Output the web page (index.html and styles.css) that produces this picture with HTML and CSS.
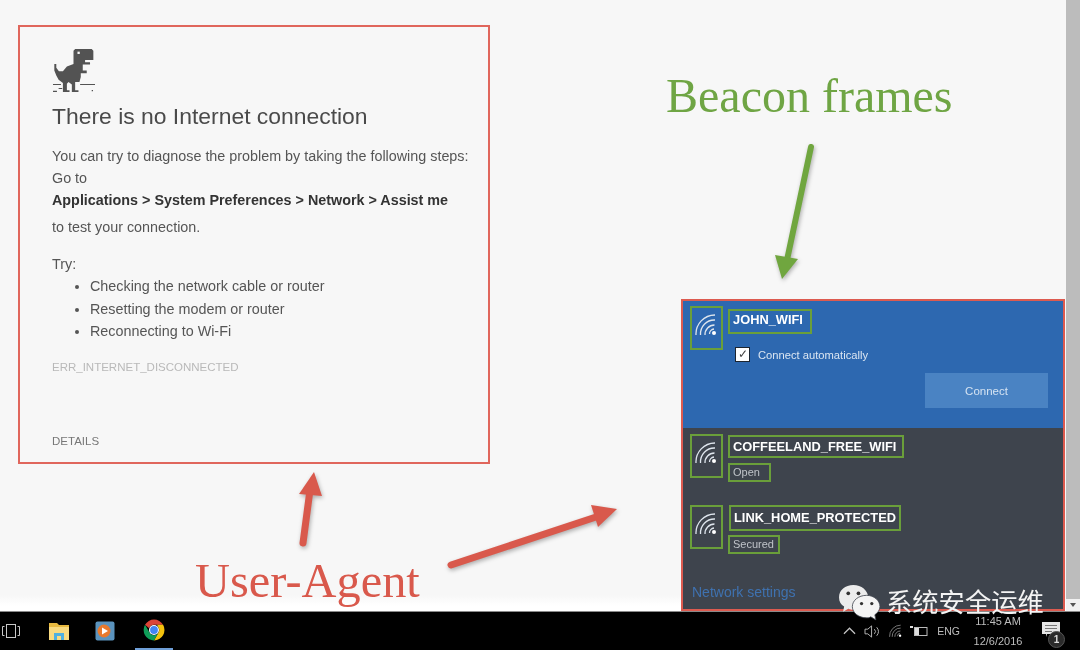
FILE: index.html
```html
<!DOCTYPE html>
<html lang="en">
<head>
    <meta charset="UTF-8">
    <meta name="viewport" content="width=device-width, initial-scale=1.0">
    <title>Beacon frames and User-Agent</title>
    <link rel="stylesheet" href="styles.css">
</head>
<body>
    <svg class="defs" width="0" height="0">
        <symbol id="wifi" viewBox="0 0 24 24">
            <path class="arc" d="M1 22A19 19 0 0 1 20 2" />
            <path class="arc" d="M5.500 22A14 14 0 0 1 20 7" />
            <path class="arc" d="M10 22A9.500 9.500 0 0 1 19.500 12" />
            <path class="arc" d="M14.500 21A5 5 0 0 1 19 16" />
            <circle class="dot" cx="19" cy="20" r="2" />
        </symbol>
    </svg>

    <div class="screen">
        <main class="stage">
            <section class="error-box">
                <svg class="dino" viewBox="35 20 130 140">
                    <path class="dino-body" d="M105 25H155L160 30V58H135V65H150V72H128V90H140V98H122V110L118 125H105V150H115V155H95V132L85 125L80 130V150H88V155H68V128L55 118L48 105L42 90V70H48V82L56 92H68L80 78L100 70V30Z" />
                    <rect class="dino-eye" x="112" y="33" width="7" height="7" />
                    <path class="dino-body" d="M38 131H62V134H38ZM120 131H165V134H120ZM38 151H50V155H38ZM55 143H66V146H55ZM155 149H159V153H155Z" />
                </svg>
                <h1 class="error-title">There is no Internet connection</h1>
                <p class="line first">You can try to diagnose the problem by taking the following steps:</p>
                <p class="line">Go to</p>
                <p class="line strong">Applications &gt; System Preferences &gt; Network &gt; Assist me</p>
                <p class="line gap-s">to test your connection.</p>
                <p class="line gap-l">Try:</p>
                <ul class="steps">
                    <li>Checking the network cable or router</li>
                    <li>Resetting the modem or router</li>
                    <li>Reconnecting to Wi-Fi</li>
                </ul>
                <p class="error-code">ERR_INTERNET_DISCONNECTED</p>
                <p class="details">DETAILS</p>
            </section>

            <section class="wifi-panel">
                <div class="wifi-active">
                    <div class="wifi-row">
                        <div class="mark icon-mark"><svg class="wifi-icon"><use href="#wifi" /></svg></div>
                        <div class="wifi-text">
                            <span class="mark name john">JOHN_WIFI</span>
                        </div>
                    </div>
                    <label class="auto">
                        <span class="check">&#10003;</span>
                        Connect automatically
                    </label>
                    <div class="connect-row"><span class="connect">Connect</span></div>
                </div>
                <div class="wifi-list">
                    <div class="wifi-row coffee">
                        <div class="mark icon-mark"><svg class="wifi-icon"><use href="#wifi" /></svg></div>
                        <div class="wifi-text">
                            <span class="mark name coffee-name">COFFEELAND_FREE_WIFI</span>
                            <span class="mark status open">Open</span>
                        </div>
                    </div>
                    <div class="wifi-row link">
                        <div class="mark icon-mark"><svg class="wifi-icon"><use href="#wifi" /></svg></div>
                        <div class="wifi-text">
                            <span class="mark name link-name">LINK_HOME_PROTECTED</span>
                            <span class="mark status secured">Secured</span>
                        </div>
                    </div>
                    <div class="settings">Network settings</div>
                </div>
            </section>

            <div class="scrollbar"><span class="scroll-down"></span></div>

            <!-- annotations on top of the screenshot -->
            <div class="label beacon">Beacon frames</div>
            <div class="label agent">User-Agent</div>
            <svg class="arrows" viewBox="0 0 1080 610">
                <g class="arrow-red">
                    <path class="shaft" d="M303 543L310 490" />
                    <path class="head" d="M314 472L322 496L299 494Z" />
                    <path class="shaft" d="M451 565L596 517" />
                    <path class="head" d="M617 509L598 527L591 505Z" />
                </g>
                <g class="arrow-green">
                    <path class="shaft thin" d="M811 147L787 260" />
                    <path class="head" d="M782 279L775 255L798 259Z" />
                </g>
            </svg>
        </main>

        <footer class="taskbar">
            <div class="task-left">
                <svg class="task-view" viewBox="0 0 18 16">
                    <rect x="4.500" y="1.500" width="9" height="13" />
                    <path d="M2.500 3.500H.5V12.500H2.500M15.500 3.500H17.500V12.500H15.500" />
                </svg>
                <svg class="folder" viewBox="0 0 22 19">
                    <path class="folder-back" d="M1 1H9L11 3H21V18H1Z" />
                    <rect class="folder-front" x="1" y="5" width="20" height="13" />
                    <path class="folder-blue" d="M6 11H16V18H13V14H9V18H6Z" />
                </svg>
                <svg class="player" viewBox="0 0 20 20">
                    <rect class="player-bg" x="0.500" y="0.500" width="19" height="19" rx="2" />
                    <circle class="player-disc" cx="9" cy="10" r="6.500" />
                    <path class="player-play" d="M7 6.500L13 10L7 13.500Z" />
                </svg>
                <div class="chrome-tab">
                    <svg class="chrome" viewBox="0 0 22 22">
                        <path class="c-red" d="M2 5.800A10.500 10.500 0 0 1 20.100 5.800H11A5.200 5.200 0 0 0 6.100 9.300Z" />
                        <path class="c-yellow" d="M20.100 5.800A10.500 10.500 0 0 1 11 21.500L15.500 13.600A5.200 5.200 0 0 0 15.500 8.400L14 5.800Z" />
                        <path class="c-green" d="M11 21.500A10.500 10.500 0 0 1 2 5.800L6.500 13.600A5.200 5.200 0 0 0 15.500 13.600Z" />
                        <circle class="c-white" cx="11" cy="11" r="5" />
                        <circle class="c-blue" cx="11" cy="11" r="3.900" />
                    </svg>
                </div>
            </div>
            <div class="tray">
                <svg class="tray-caret" viewBox="0 0 14 8"><path d="M1 7L7 1L13 7" /></svg>
                <svg class="tray-speaker" viewBox="0 0 18 16">
                    <path d="M1 5.500H4L8 2V14L4 10.500H1Z" />
                    <path d="M11 5.500A3.500 3.500 0 0 1 11 10.500M13.500 3.500A7 7 0 0 1 13.500 12.500" />
                </svg>
                <svg class="tray-wifi"><use href="#wifi" /></svg>
                <svg class="tray-battery" viewBox="0 0 18 12">
                    <path class="batt-fill" d="M0 1H3V3H0ZM4 3H9V10H4Z" />
                    <rect x="4.500" y="2.500" width="12.500" height="8" />
                </svg>
                <span class="tray-lang">ENG</span>
                <div class="clock">
                    <span>11:45 AM</span>
                    <span>12/6/2016</span>
                </div>
                <div class="notify">
                    <svg class="notify-icon" viewBox="0 0 18 15">
                        <path class="note" d="M0 0H18V12H5L4 15V12H0Z" />
                        <path class="note-lines" d="M3 3.500H15M3 6.500H15M3 9.500H10" />
                    </svg>
                    <span class="badge">1</span>
                </div>
            </div>
        </footer>

        <div class="watermark">
            <svg class="wechat" viewBox="0 0 42 36">
                <path class="bubble" d="M15 1C7 1 1 6 1 13C1 17 3 20 6 22L5 27L10 24C12 25 15 25 18 25L30 14C29 6 23 1 15 1Z" />
                <circle class="eye" cx="10" cy="9" r="1.800" />
                <circle class="eye" cx="20" cy="9" r="1.800" />
                <path class="bubble small" d="M28 11C20 11 14 16 14 22C14 28 20 33 28 33C29 33 31 33 32 32L37 35L36 30C39 28 41 25 41 22C41 16 35 11 28 11Z" />
                <circle class="eye" cx="23" cy="19" r="1.600" />
                <circle class="eye" cx="33" cy="19" r="1.600" />
            </svg>
            <span class="watermark-text">系统安全运维</span>
        </div>
    </div>
</body>
</html>
```

FILE: styles.css
```css
body {
    margin: 0;
    font-family: "Liberation Sans", Arial, sans-serif;
    background-color: #f7f7f7;
}

p, h1, ul {
    margin: 0;
    padding: 0;
}

.defs {
    position: absolute;
}

.screen {
    position: relative;
    display: flex;
    flex-direction: column;
    width: 1080px;
    height: 650px;
    overflow: hidden;
    filter: blur(0.55px);
}

.stage {
    position: relative;
    flex: 1;
    display: flex;
    align-items: flex-start;
    padding: 25px 0 0 18px;
    background: linear-gradient(#f7f7f7 595px, #ffffff 606px);
}

/* chrome error page */
.error-box {
    box-sizing: border-box;
    width: 472px;
    height: 439px;
    padding: 20px 0 0 32px;
    border: 2.500px solid #e0665c;
    color: #555;
    font-size: 14.350px;
}

.dino {
    display: block;
    width: 43px;
    height: 47px;
}

.dino-body {
    fill: #535353;
}

.dino-eye {
    fill: #f7f7f7;
}

.error-title {
    margin-top: 6px;
    font-size: 22.900px;
    line-height: 32px;
    font-weight: normal;
    color: #4a4a4a;
}

.line {
    line-height: 22px;
}

.line.first {
    margin-top: 13px;
}

.strong {
    font-weight: bold;
    color: #333;
}

.gap-s {
    margin-top: 5px;
}

.gap-l {
    margin-top: 15px;
}

.steps {
    padding-left: 38px;
}

.steps li {
    line-height: 22.500px;
}

.error-code {
    margin-top: 13px;
    font-size: 11.500px;
    line-height: 22px;
    color: #b9b9b9;
}

.details {
    margin-top: 52px;
    font-size: 11.500px;
    line-height: 22px;
    color: #777;
}

/* windows wifi flyout */
.wifi-panel {
    box-sizing: border-box;
    display: flex;
    flex-direction: column;
    width: 384px;
    height: 312px;
    margin: 274px 0 0 191px;
    border: 2px solid #dd5b50;
}

.wifi-active {
    height: 127px;
    padding: 5px 15px 0 7px;
    box-sizing: border-box;
    background-color: #2d68b0;
    color: #fff;
}

.wifi-list {
    position: relative;
    flex: 1;
    padding: 6px 7px 0;
    background-color: #3e444d;
    color: #fff;
}

.wifi-row {
    display: flex;
    gap: 5px;
}

.wifi-row.link {
    margin-top: 23px;
}

.mark {
    box-sizing: border-box;
    border: 2px solid #6a9f3a;
}

.icon-mark {
    flex: none;
    width: 33px;
    height: 44px;
    padding: 5px 0 0 3px;
}

.wifi-icon {
    display: block;
    width: 24px;
    height: 24px;
    color: #dfe6ee;
}

.arc {
    fill: none;
    stroke: currentColor;
    stroke-width: 1.300;
}

.dot {
    fill: #fff;
}

.wifi-text {
    display: flex;
    flex-direction: column;
    align-items: flex-start;
}

.name {
    display: block;
    padding-left: 3px;
    font-size: 12.850px;
    font-weight: bold;
    white-space: nowrap;
}

.john {
    width: 84px;
    height: 25px;
    margin-top: 3px;
    line-height: 18px;
}

.coffee-name {
    width: 176px;
    height: 23px;
    margin-top: 1px;
    line-height: 19px;
}

.link-name {
    width: 172px;
    height: 26px;
    margin-left: 1px;
    line-height: 22px;
}

.status {
    display: block;
    height: 19px;
    padding-left: 3px;
    font-size: 11px;
    line-height: 14px;
    color: #bfc3c8;
}

.open {
    width: 43px;
    margin-top: 5px;
}

.secured {
    width: 52px;
    margin-top: 4px;
}

.auto {
    display: flex;
    align-items: center;
    gap: 8px;
    margin: -3px 0 0 45px;
    font-size: 11.200px;
    color: #dbe6f2;
}

.check {
    box-sizing: border-box;
    display: block;
    width: 15px;
    height: 15px;
    border: 1px solid #1c2530;
    background-color: #fff;
    color: #444;
    font-size: 12px;
    line-height: 13px;
    text-align: center;
}

.connect-row {
    display: flex;
    justify-content: flex-end;
    margin-top: 11px;
}

.connect {
    width: 123px;
    height: 35px;
    background-color: #4a83c3;
    color: #d5e3f2;
    font-size: 11.500px;
    line-height: 36px;
    text-align: center;
}

.settings {
    position: absolute;
    left: 9px;
    bottom: 9px;
    font-size: 14px;
    color: #3f72b0;
}

.scrollbar {
    position: absolute;
    top: 0;
    right: 0;
    bottom: 0;
    width: 14px;
    background-color: #bcbcbc;
}

.scroll-down {
    position: absolute;
    left: 0;
    right: 0;
    bottom: 0;
    height: 12px;
    background-color: #f1f1f1;
}

.scroll-down::after {
    content: "";
    position: absolute;
    left: 4px;
    top: 4px;
    border-left: 3.500px solid transparent;
    border-right: 3.500px solid transparent;
    border-top: 4px solid #555;
}

/* annotations */
.label {
    position: absolute;
    font-family: "Liberation Serif", "Times New Roman", serif;
    white-space: nowrap;
}

.beacon {
    left: 666px;
    top: 66px;
    font-size: 48px;
    line-height: 60px;
    color: #6fa544;
}

.agent {
    left: 195px;
    top: 552px;
    font-size: 48.400px;
    line-height: 58px;
    color: #d9594c;
}

.arrows {
    position: absolute;
    left: 0;
    top: 0;
    width: 1080px;
    height: 610px;
    filter: drop-shadow(1px 2px 2px rgba(0, 0, 0, 0.3));
}

.shaft {
    fill: none;
    stroke-width: 7px;
    stroke-linecap: round;
}

.shaft.thin {
    stroke-width: 6px;
}

.arrow-red .shaft {
    stroke: #d9594c;
}

.arrow-red .head {
    fill: #d9594c;
}

.arrow-green .shaft {
    stroke: #70a63f;
}

.arrow-green .head {
    fill: #70a63f;
}

/* taskbar */
.taskbar {
    box-sizing: border-box;
    display: flex;
    justify-content: space-between;
    height: 40px;
    border-top: 1px solid #8a8a8a;
    border-bottom: 1px solid #777;
    background-color: #000;
}

.task-left {
    display: flex;
    align-items: center;
    padding-left: 2px;
}

.task-view {
    width: 18px;
    height: 16px;
    fill: none;
    stroke: #c8c8c8;
    stroke-width: 1;
}

.folder {
    width: 22px;
    height: 19px;
    margin-left: 28px;
}

.folder-back {
    fill: #e7b93f;
}

.folder-front {
    fill: #f8da80;
}

.folder-blue {
    fill: #4fb0e0;
}

.player {
    width: 20px;
    height: 20px;
    margin-left: 25px;
}

.player-bg {
    fill: #5b93bd;
}

.player-disc {
    fill: #e8792d;
}

.player-play {
    fill: #fff;
}

.chrome-tab {
    display: flex;
    align-items: center;
    justify-content: center;
    box-sizing: border-box;
    width: 38px;
    height: 38px;
    margin-left: 20px;
    border-bottom: 2px solid #6f9fd8;
}

.chrome {
    width: 22px;
    height: 22px;
}

.c-red {
    fill: #db4437;
}

.c-yellow {
    fill: #f4c20d;
}

.c-green {
    fill: #0f9d58;
}

.c-white {
    fill: #fff;
}

.c-blue {
    fill: #4285f4;
}

.tray {
    display: flex;
    align-items: center;
    padding-right: 15px;
    color: #bdbdbd;
}

.tray-caret {
    width: 13px;
    height: 8px;
    fill: none;
    stroke: #c4c4c4;
    stroke-width: 1.300;
}

.tray-speaker {
    width: 17px;
    height: 15px;
    margin-left: 8px;
    fill: none;
    stroke: #bbb;
    stroke-width: 1;
}

.tray-wifi {
    width: 14px;
    height: 14px;
    margin-left: 8px;
    color: #9a9a9a;
}

.tray-battery {
    width: 18px;
    height: 12px;
    margin-left: 7px;
    fill: none;
    stroke: #bbb;
    stroke-width: 1;
}

.batt-fill {
    fill: #ddd;
    stroke: none;
}

.tray-lang {
    margin-left: 9px;
    font-size: 10.500px;
}

.clock {
    display: flex;
    flex-direction: column;
    align-items: center;
    gap: 8px;
    width: 52px;
    margin: -1px 0 0 12px;
    font-size: 11px;
    line-height: 12px;
}

.notify {
    position: relative;
    width: 18px;
    height: 15px;
    margin: -3px 5px 0 18px;
}

.notify-icon {
    display: block;
    width: 18px;
    height: 15px;
}

.note {
    fill: #e6e6e6;
}

.note-lines {
    fill: none;
    stroke: #777;
    stroke-width: 1;
}

.badge {
    position: absolute;
    left: 6px;
    top: 9px;
    width: 15px;
    height: 15px;
    border: 1px solid #555;
    border-radius: 50%;
    background-color: #2b2b2b;
    color: #ddd;
    font-size: 10px;
    font-weight: bold;
    line-height: 15px;
    text-align: center;
}

/* wechat watermark */
.watermark {
    position: absolute;
    left: 838px;
    top: 580px;
    display: flex;
    align-items: center;
    gap: 5px;
}

.wechat {
    width: 43px;
    height: 37px;
    margin-top: 4px;
}

.bubble {
    fill: #ececec;
}

.bubble.small {
    fill: #f4f4f4;
    stroke: #3e444d;
    stroke-width: 0.800;
}

.eye {
    fill: #333;
}

.watermark-text {
    font-family: "Noto Sans CJK SC", sans-serif;
    font-size: 26.300px;
    line-height: 26px;
    color: #f4f4f4;
    white-space: nowrap;
}
```
